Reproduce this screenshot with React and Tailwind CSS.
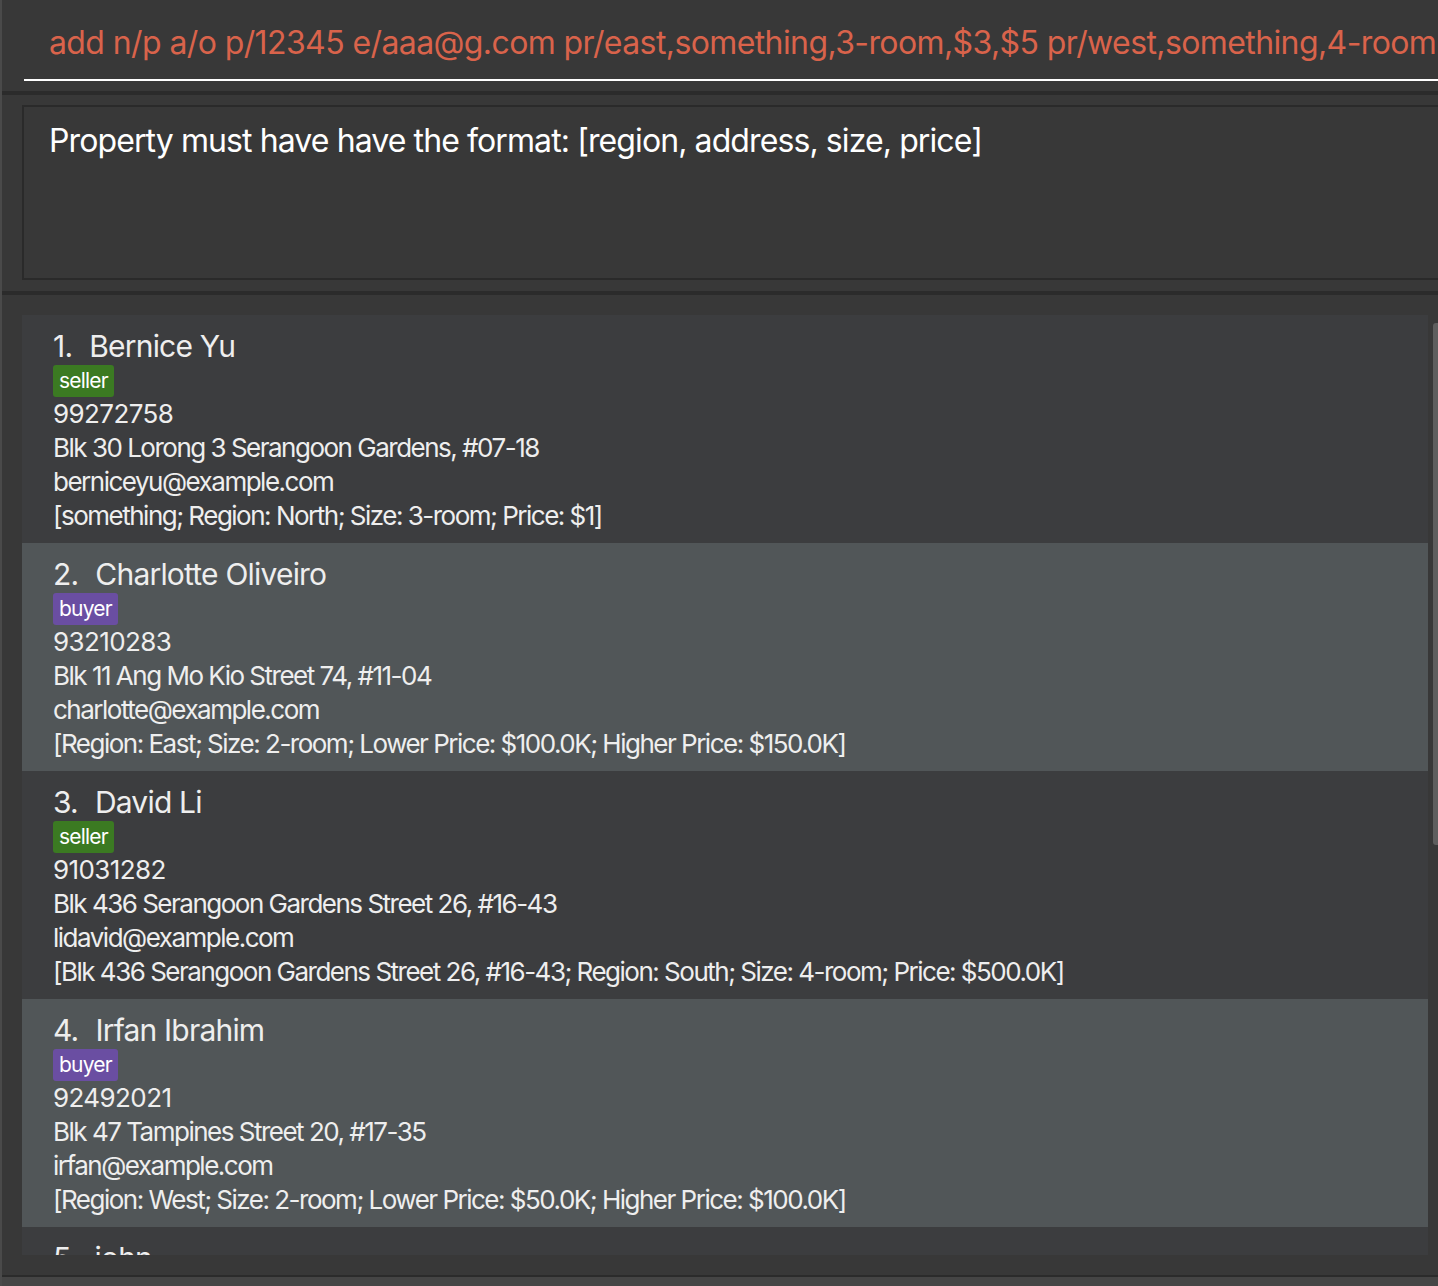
const people = [
  {
    id: 1,
    name: 'Bernice Yu',
    tag: 'seller',
    phone: '99272758',
    address: 'Blk 30 Lorong 3 Serangoon Gardens, #07-18',
    email: 'berniceyu@example.com',
    property: '[something; Region: North; Size: 3-room; Price: $1]',
  },
  {
    id: 2,
    name: 'Charlotte Oliveiro',
    tag: 'buyer',
    phone: '93210283',
    address: 'Blk 11 Ang Mo Kio Street 74, #11-04',
    email: 'charlotte@example.com',
    property: '[Region: East; Size: 2-room; Lower Price: $100.0K; Higher Price: $150.0K]',
  },
  {
    id: 3,
    name: 'David Li',
    tag: 'seller',
    phone: '91031282',
    address: 'Blk 436 Serangoon Gardens Street 26, #16-43',
    email: 'lidavid@example.com',
    property: '[Blk 436 Serangoon Gardens Street 26, #16-43; Region: South; Size: 4-room; Price: $500.0K]',
  },
  {
    id: 4,
    name: 'Irfan Ibrahim',
    tag: 'buyer',
    phone: '92492021',
    address: 'Blk 47 Tampines Street 20, #17-35',
    email: 'irfan@example.com',
    property: '[Region: West; Size: 2-room; Lower Price: $50.0K; Higher Price: $100.0K]',
  },
  {
    id: 5,
    name: 'john',
    tag: 'seller',
    phone: '12345678',
    address: '',
    email: '',
    property: '',
  },
];

function PersonCard({ person, index }) {
  const light = index % 2 === 1;
  return (
    <div className={`h-[228px] shrink-0 pl-[31px] pt-[12px] ${light ? 'bg-[#515658]' : 'bg-[#3c3d3f]'}`}>
      <div className="flex h-[38px] items-center gap-[17px] text-[30px] leading-[38px] tracking-[-0.8px] text-[#eeeeee]">
        <span>{person.id}.</span>
        <span>{person.name}</span>
      </div>
      <div className="flex h-[32px]">
        <span
          className={`rounded-[3px] px-[6px] text-[21px] leading-[32px] tracking-[-0.8px] text-white ${
            person.tag === 'seller' ? 'bg-[#3b7a22]' : 'bg-[#6a4ea2]'
          }`}
        >
          {person.tag}
        </span>
      </div>
      <div className="text-[26px] leading-[34px] tracking-[-1.5px] text-[#eeeeee]">
        <p className="tracking-[-0.6px]">{person.phone}</p>
        <p>{person.address}</p>
        <p>{person.email}</p>
        <p>{person.property}</p>
      </div>
    </div>
  );
}

export default function App() {
  return (
    <div className="flex h-[1286px] w-[1438px] overflow-hidden bg-[#383838] font-['Inter','Noto_Sans',sans-serif]">
      <div className="w-[2px] shrink-0 bg-[#4a4a4a]" />
      <div className="flex min-w-0 flex-1 flex-col">
        <div className="h-[91px] shrink-0 pl-[22px]">
          <div className="h-[81px] overflow-hidden border-b-2 border-white pl-[25px] pt-[23px]">
            <p className="whitespace-nowrap text-[32px] leading-[40px] tracking-[-0.6px] text-[#d9634b]">
              add n/p a/o p/12345 e/aaa@g.com pr/east,something,3-room,$3,$5 pr/west,something,4-room,$4,$6
            </p>
          </div>
        </div>
        <div className="h-[4px] shrink-0 bg-[#2b2b2b]" />
        <div className="h-[196px] shrink-0 pl-[20px] pt-[10px]">
          <div className="h-[175px] border-2 border-r-0 border-[#2a2a2a] pl-[25px] pt-[14px]">
            <p className="text-[32px] leading-[40px] tracking-[-0.9px] text-white">
              Property must have have the format: [region, address, size, price]
            </p>
          </div>
        </div>
        <div className="h-[4px] shrink-0 bg-[#2b2b2b]" />
        <div className="flex h-[980px] shrink-0 pl-[20px] pt-[20px]">
          <div className="flex h-[940px] w-[1406px] flex-col overflow-hidden">
            {people.map((person, index) => (
              <PersonCard key={person.id} person={person} index={index} />
            ))}
          </div>
          <div className="ml-[5px] mt-[8px] h-[522px] w-[5px] rounded-l-[3px] bg-[#5e5e5e]" />
        </div>
        <div className="h-[2px] shrink-0 bg-[#2b2b2b]" />
        <div className="flex-1 bg-[#454545]" />
      </div>
    </div>
  );
}
